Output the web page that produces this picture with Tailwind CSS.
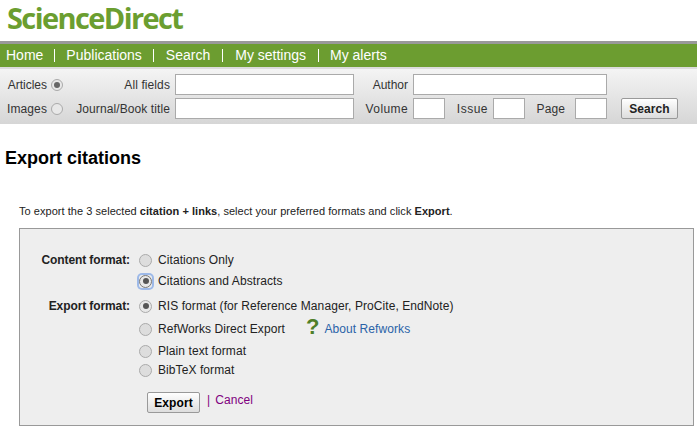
<!DOCTYPE html>
<html><head><meta charset="utf-8"><script src="https://cdn.jsdelivr.net/npm/@tailwindcss/browser@4"></script></head>
<body class="bg-white w-[697px] h-[430px] overflow-hidden font-['Liberation_Sans',sans-serif] text-[#222]">
<header class="h-[41px] pl-[7px] flex items-start"><div class="font-['Open_Sans',sans-serif] font-bold text-[29px] leading-[40px] -mt-[2px] tracking-[-1.6px] text-[#6b9e30] whitespace-nowrap">ScienceDirect</div></header>
<nav class="border-t-[3px] border-[#999] bg-[#6c9d30] h-[26px] flex items-center text-white text-[14px] pl-[6px]">
<a>Home</a><span class="mx-[11px] w-px h-[13px] bg-white"></span><a>Publications</a><span class="ml-[11px] mr-[12px] w-px h-[13px] bg-white"></span><a>Search</a><span class="mx-[12px] w-px h-[13px] bg-white"></span><a>My settings</a><span class="ml-[12px] mr-[11px] w-px h-[13px] bg-white"></span><a>My alerts</a></nav>
<form class="h-[57px] bg-gradient-to-b from-[#f4f4f4] to-[#d6d6d6] border-t-2 border-[#dcdcdc] text-[12px] tracking-[0.1px] text-[#333] pt-[5px] flex flex-col gap-[3px]">
<div class="flex items-center h-[21px]">
<span class="w-[47px] text-right tracking-normal">Articles</span><span class="ml-[4px] w-3 h-3 rounded-full border border-[#aaa] bg-[#e8e8e8] flex items-center justify-center"><span class="w-[6px] h-[6px] rounded-full bg-[#666]"></span></span>
<span class="w-[107px] text-right">All fields</span>
<span class="ml-[5px] w-[179px] h-[21px] bg-white border border-[#aaa] shrink-0"></span>
<span class="w-[54px] text-right tracking-normal">Author</span>
<span class="ml-[5px] w-[194px] h-[21px] bg-white border border-[#aaa]"></span>
</div>
<div class="flex items-center h-[21px]">
<span class="w-[47px] text-right">Images</span><span class="ml-[4px] w-3 h-3 rounded-full border border-[#aaa] bg-[#e8e8e8]"></span>
<span class="w-[107px] text-right">Journal/Book title</span>
<span class="ml-[5px] w-[179px] h-[21px] bg-white border border-[#aaa] shrink-0"></span>
<span class="w-[54px] text-right tracking-[0.4px]">Volume</span>
<span class="ml-[5px] w-[32px] h-[21px] bg-white border border-[#aaa]"></span>
<span class="w-[43px] text-right tracking-[0.5px]">Issue</span>
<span class="ml-[5px] w-[32px] h-[21px] bg-white border border-[#aaa]"></span>
<span class="w-[40px] text-right">Page</span>
<span class="ml-[10px] w-[32px] h-[21px] bg-white border border-[#aaa]"></span>
<span class="ml-[14px] w-[57px] h-[21px] rounded-[2px] border border-[#999] bg-gradient-to-b from-white to-[#ddd] font-bold text-[12px] text-[#222] flex items-center justify-center">Search</span>
</div>
</form>
<h1 class="ml-[5px] mt-[25px] font-bold text-[18px] leading-[18px] text-black">Export citations</h1>
<p class="ml-[19px] mt-[37px] text-[11px] tracking-[0.04px] leading-[14px] text-[#222]">To export the 3 selected <b>citation + links</b>, select your preferred formats and click <b>Export</b>.</p>
<section class="ml-[19px] mt-[10px] w-[675px] h-[198px] border border-[#999] bg-[#eee] text-[12px] tracking-[0.08px] text-[#222] pt-[21px]">
<div class="flex items-center h-[20px]"><b class="w-[110px] text-right tracking-[-0.1px]">Content format:</b><span class="ml-[9px] w-[13px] h-[13px] rounded-full border border-[#aaa] bg-[#ddd]"></span><span class="ml-[6px]">Citations Only</span></div>
<div class="flex items-center h-[20px] mt-[1px]"><span class="ml-[119px] w-[13px] h-[13px] rounded-[3px] ring-2 ring-[#9db9e8] flex items-center justify-center"><span class="w-[13px] h-[13px] rounded-full border border-[#777] bg-[#e8e8e8] flex items-center justify-center"><span class="w-[6px] h-[6px] rounded-full bg-[#555]"></span></span></span><span class="ml-[6px]">Citations and Abstracts</span></div>
<div class="flex items-center h-[20px] mt-[5px]"><b class="w-[110px] text-right tracking-[-0.1px]">Export format:</b><span class="ml-[9px] w-[13px] h-[13px] rounded-full border border-[#aaa] bg-[#e8e8e8] flex items-center justify-center"><span class="w-[6px] h-[6px] rounded-full bg-[#555]"></span></span><span class="ml-[6px]">RIS format (for Reference Manager, ProCite, EndNote)</span></div>
<div class="flex items-center h-[20px] mt-[3px]"><span class="ml-[119px] w-[13px] h-[13px] rounded-full border border-[#aaa] bg-[#ddd]"></span><span class="ml-[6px]">RefWorks Direct Export</span><span class="ml-[21px] text-[22px] leading-[20px] font-bold text-[#4f7f28] -mt-[4px]">?</span><a class="ml-[5px] text-[#2a63a8]">About Refworks</a></div>
<div class="flex items-center h-[20px] mt-[2px]"><span class="ml-[119px] w-[13px] h-[13px] rounded-full border border-[#aaa] bg-[#ddd]"></span><span class="ml-[6px]">Plain text format</span></div>
<div class="flex items-center h-[20px] mt-[-1px]"><span class="ml-[119px] w-[13px] h-[13px] rounded-full border border-[#aaa] bg-[#ddd]"></span><span class="ml-[6px]">BibTeX format</span></div>
<div class="flex items-start mt-[12px]"><span class="ml-[127px] w-[53px] h-[21px] rounded-[2px] border border-[#999] bg-gradient-to-b from-white to-[#ddd] font-bold text-black flex items-center justify-center">Export</span><span class="ml-[7px] mt-[1px] text-[#800080] leading-[14px]">|</span><a class="ml-[5px] mt-[1px] text-[#800080] leading-[14px]">Cancel</a></div>
</section>
</body></html>
